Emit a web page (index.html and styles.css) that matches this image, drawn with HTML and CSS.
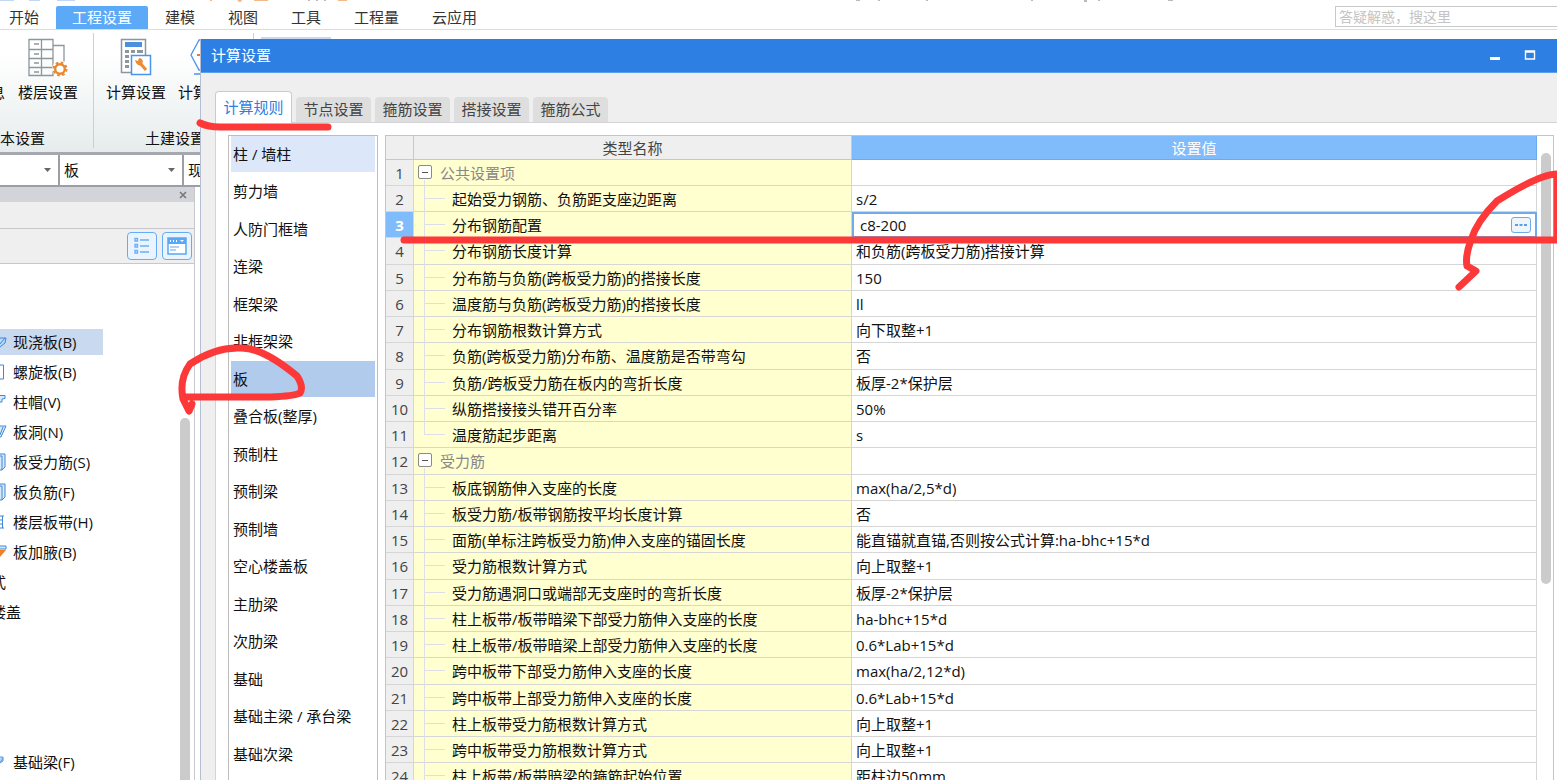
FILE: index.html
```html
<!DOCTYPE html>
<html lang="zh-CN">
<head>
<meta charset="utf-8">
<meta name="viewport" content="width=device-width, initial-scale=1">
<title>计算设置</title>
<link rel="stylesheet" href="styles.css">
</head>
<body>
<div class="app">
  <svg class="title-scraps" width="1200" height="3" aria-hidden="true">
    <path d="M0 0h14v1H0zM29 0h11v1H29zM57 0h18v1H57z" fill="#c3d6f3"/>
    <path d="M210 0h2v1h-2zM237 0h5l-1 2h-2zM254 0h14v1h-14zM338 0h9v1h-9z" fill="#f2b98b"/>
    <path d="M308 0h2v1h-2zM316 0h2v1h-2zM324 0h2v1h-2zM856 0h4v1h-4zM878 0h2v1h-2zM926 0h2v1h-2zM1031 0h2v1h-2zM1084 0h3v2h-3zM1098 0h2v1h-2zM1168 0h5v1h-5z" fill="#b9b9c4"/>
  </svg>
  <nav class="menu">
    <button>开始</button>
    <button class="menu-active">工程设置</button>
    <button>建模</button>
    <button>视图</button>
    <button>工具</button>
    <button>工程量</button>
    <button>云应用</button>
    <input class="search" type="text" aria-label="搜索" placeholder="答疑解惑，搜这里">
  </nav>

  <section class="ribbon">
    <div class="group group-base">
      <div class="tools">
        <button class="tool tool-info"><span class="icon"></span>息</button>
        <button class="tool"><svg class="icon" viewBox="0 0 42 40" width="42" height="40" fill="none" stroke="#8c969b" stroke-width="1.3">
          <path d="M2 1.500h24v36H2zM2 11.500h24M2 20.500h24M2 29.500h24M14.500 2v35M7 6h5M7 16h5M7 25h5M7 34h5M26 7.500h11v16"/>
          <circle cx="33" cy="31" r="8" fill="#fff" stroke="none"/>
          <circle cx="33" cy="31" r="6.500" stroke="#e8872e" stroke-width="2" stroke-dasharray="2.600 2.500"/>
          <circle cx="33" cy="31" r="4.800" stroke="#e8872e" stroke-width="2.400"/></svg>楼层设置</button>
      </div>
      <h2>本设置</h2>
    </div>
    <div class="group group-civil">
      <div class="tools">
        <button class="tool"><svg class="icon" viewBox="0 0 42 40" width="42" height="40" fill="none">
          <path d="M6.500 1.500h24v33h-24z" fill="#fff" stroke="#8c969b" stroke-width="1.500"/>
          <path d="M10 4h17v5H10z" fill="#4a8fe0"/>
          <path d="M10 12h4v3h-4zM16 12h4v3h-4zM22 12h6v3h-6zM10 17h4v3h-4zM10 22h4v3h-4zM10 27h4v3h-4z" fill="#8c969b"/>
          <path d="M16.500 17.500h19v19h-19z" fill="#fff" stroke="#4a94ea" stroke-width="1.500"/>
          <path d="M25 25l6 7" stroke="#ec8b33" stroke-width="3"/>
          <path d="M20 22l3 1 1-3c3 0 5 3 3 6s-6 1-7-4z" fill="#ec8b33"/></svg>计算设置</button>
        <button class="tool"><svg class="icon" viewBox="0 0 42 40" width="42" height="40" fill="none" stroke="#4a94ea" stroke-width="1.300">
          <path d="M12 2L4 17l8 15h18l8-15-8-15zM7 36h28"/><path d="M10 17h12" stroke="#ec7a28" stroke-width="2"/></svg>计算规则</button>
      </div>
      <h2>土建设置</h2>
    </div>
    <div class="group-next"></div>
  </section>

  <div class="selectors">
    <label class="combo combo-floor"><select aria-label="楼层"><option></option></select><svg width="7" height="4" viewBox="0 0 7 4"><path d="M0 0h7L3.500 4z" fill="#666"/></svg></label>
    <label class="combo combo-type"><select aria-label="构件类型"><option>板</option></select><svg width="7" height="4" viewBox="0 0 7 4"><path d="M0 0h7L3.500 4z" fill="#666"/></svg></label>
    <label class="combo combo-part"><select aria-label="构件"><option>现浇板</option></select></label>
  </div>

  <aside class="panel">
    <div class="panel-head"><button class="close" aria-label="关闭"><svg width="8" height="8" viewBox="0 0 8 8"><path d="M1 1l6 6M7 1L1 7" stroke="#777" stroke-width="1.600"/></svg></button></div>
    <div class="panel-band"></div>
    <div class="panel-tools">
      <button class="view" aria-label="列表"><svg width="18" height="18" viewBox="0 0 18 18" fill="none" stroke="#6aaef2" stroke-width="1.300"><path d="M2 1.500h2.500V4H2zM2 7.500h2.500V10H2zM2 13.500h2.500V16H2zM7 3h9M7 9h9M7 15h9"/></svg></button>
      <button class="view" aria-label="窗口"><svg width="20" height="18" viewBox="0 0 20 18"><path d="M1 1h18v16H1z" fill="#fff" stroke="#5aa7f5" stroke-width="1.500"/><path d="M1 1h18v6H1z" fill="#5aa7f5"/><path d="M3 3h1v2H3zM6 3h1v2H6zM9 3h1v2H9zM13 3h4l-2 2z" fill="#fff"/><path d="M3 10h9M3 13h6" stroke="#5aa7f5"/></svg></button>
    </div>
    <div class="tree">
      <ul>
        <li class="tree-on"><svg class="mark" viewBox="0 0 8 14"><path d="M-4 9L0 3h6L5 8l-5 4zM0 9l5-6" fill="#b9d8f8" stroke="#3e87d8"/></svg><span>现浇板(B)</span></li>
        <li><svg class="mark" viewBox="0 0 8 14"><path d="M-4 0h7.500v14H-4z" fill="#fff" stroke="#3e87d8"/></svg><span>螺旋板(B)</span></li>
        <li><svg class="mark" viewBox="0 0 8 14"><path d="M-4 .5h9v3L2 4v3h-6" fill="#dbeafb" stroke="#3e87d8"/></svg><span>柱帽(V)</span></li>
        <li><svg class="mark" viewBox="0 0 8 14"><path d="M-2 1h8L1 12H-2zM3 2l-3 8" fill="#dbeafb" stroke="#3e87d8"/></svg><span>板洞(N)</span></li>
        <li><svg class="mark" viewBox="0 0 8 18"><path d="M-3 1h8v13l-3 3h-5zM2 3v14M-3 3h5" fill="#dbeafb" stroke="#3e87d8"/></svg><span>板受力筋(S)</span></li>
        <li><svg class="mark" viewBox="0 0 8 18"><path d="M-3 1h8v13l-3 3h-5zM2 3v14M-3 3h5" fill="#dbeafb" stroke="#3e87d8"/></svg><span>板负筋(F)</span></li>
        <li><svg class="mark" viewBox="0 0 8 14"><path d="M0 1h4M0 13h4M0 5h2M0 9h2M2.500 1v12" fill="none" stroke="#3e87d8"/></svg><span>楼层板带(H)</span></li>
        <li><svg class="mark" viewBox="0 0 8 14"><path d="M-2 1h8v3h-8z" fill="#dbeafb" stroke="#3e87d8"/><path d="M-2 5h8L0 12z" fill="#f08020"/></svg><span>板加腋(B)</span></li>
        <li class="tree-cut">式</li>
        <li class="tree-cut">楼盖</li>
      </ul>
      <ul>
        <li><svg class="mark" viewBox="0 0 8 14"><path d="M-3 2h6v4l-6 4zM0 8l3-5" fill="#b9d8f8" stroke="#5a9ae0"/></svg><span>基础梁(F)</span></li>
      </ul>
      <span class="tree-scroll"></span>
    </div>
  </aside>

  <section class="dialog" role="dialog" aria-labelledby="dialog-title">
    <header class="dialog-head">
      <h1 id="dialog-title">计算设置</h1>
      <button class="win" aria-label="最小化"><svg width="12" height="12" viewBox="0 0 12 12"><path d="M1 8h10v3H1z" fill="#fff"/></svg></button>
      <button class="win" aria-label="最大化"><svg width="12" height="12" viewBox="0 0 12 12"><path d="M1.500 2h9v8h-9zM1 3h10" fill="none" stroke="#fff" stroke-width="1.400"/></svg></button>
    </header>
    <div class="tabs" role="tablist">
      <button role="tab" class="tab tab-on" aria-selected="true">计算规则</button>
      <button role="tab" class="tab">节点设置</button>
      <button role="tab" class="tab">箍筋设置</button>
      <button role="tab" class="tab">搭接设置</button>
      <button role="tab" class="tab">箍筋公式</button>
    </div>
    <div class="page">
      <ul class="parts">
        <li class="part-first">柱 / 墙柱</li><li>剪力墙</li><li>人防门框墙</li><li>连梁</li><li>框架梁</li><li>非框架梁</li><li class="part-on">板</li><li>叠合板(整厚)</li><li>预制柱</li><li>预制梁</li><li>预制墙</li><li>空心楼盖板</li><li>主肋梁</li><li>次肋梁</li><li>基础</li><li>基础主梁 / 承台梁</li><li>基础次梁</li>
      </ul>
      <div class="grid">
        <table>
          <colgroup><col class="col-no"><col class="col-name"><col></colgroup>
          <thead><tr><th></th><th>类型名称</th><th class="head-on">设置值</th></tr></thead>
          <tbody>
            <tr class="section"><th>1</th><td><button class="fold" aria-label="折叠"></button>公共设置项</td><td></td></tr>
            <tr><th>2</th><td>起始受力钢筋、负筋距支座边距离</td><td>s/2</td></tr>
            <tr class="row-on"><th>3</th><td>分布钢筋配置</td><td><div class="editor"><input type="text" aria-label="分布钢筋配置" value="c8-200"><button class="more" aria-label="更多"><svg width="12" height="4" viewBox="0 0 12 4"><path d="M0 1h3v2H0zM4.500 1h3v2h-3zM9 1h3v2H9z" fill="#5ba0e0"/></svg></button></div></td></tr>
            <tr><th>4</th><td>分布钢筋长度计算</td><td>和负筋(跨板受力筋)搭接计算</td></tr>
            <tr><th>5</th><td>分布筋与负筋(跨板受力筋)的搭接长度</td><td>150</td></tr>
            <tr><th>6</th><td>温度筋与负筋(跨板受力筋)的搭接长度</td><td>ll</td></tr>
            <tr><th>7</th><td>分布钢筋根数计算方式</td><td>向下取整+1</td></tr>
            <tr><th>8</th><td>负筋(跨板受力筋)分布筋、温度筋是否带弯勾</td><td>否</td></tr>
            <tr><th>9</th><td>负筋/跨板受力筋在板内的弯折长度</td><td>板厚-2*保护层</td></tr>
            <tr><th>10</th><td>纵筋搭接接头错开百分率</td><td>50%</td></tr>
            <tr class="last"><th>11</th><td>温度筋起步距离</td><td>s</td></tr>
            <tr class="section"><th>12</th><td><button class="fold" aria-label="折叠"></button>受力筋</td><td></td></tr>
            <tr><th>13</th><td>板底钢筋伸入支座的长度</td><td>max(ha/2,5*d)</td></tr>
            <tr><th>14</th><td>板受力筋/板带钢筋按平均长度计算</td><td>否</td></tr>
            <tr><th>15</th><td>面筋(单标注跨板受力筋)伸入支座的锚固长度</td><td>能直锚就直锚,否则按公式计算:ha-bhc+15*d</td></tr>
            <tr><th>16</th><td>受力筋根数计算方式</td><td>向上取整+1</td></tr>
            <tr><th>17</th><td>受力筋遇洞口或端部无支座时的弯折长度</td><td>板厚-2*保护层</td></tr>
            <tr><th>18</th><td>柱上板带/板带暗梁下部受力筋伸入支座的长度</td><td>ha-bhc+15*d</td></tr>
            <tr><th>19</th><td>柱上板带/板带暗梁上部受力筋伸入支座的长度</td><td>0.6*Lab+15*d</td></tr>
            <tr><th>20</th><td>跨中板带下部受力筋伸入支座的长度</td><td>max(ha/2,12*d)</td></tr>
            <tr><th>21</th><td>跨中板带上部受力筋伸入支座的长度</td><td>0.6*Lab+15*d</td></tr>
            <tr><th>22</th><td>柱上板带受力筋根数计算方式</td><td>向上取整+1</td></tr>
            <tr><th>23</th><td>跨中板带受力筋根数计算方式</td><td>向上取整+1</td></tr>
            <tr><th>24</th><td>柱上板带/板带暗梁的箍筋起始位置</td><td>距柱边50mm</td></tr>
          </tbody>
        </table>
        <div class="scroll"><span></span></div>
      </div>
    </div>
  </section>

  <svg class="pen" viewBox="0 0 1557 780" width="1557" height="780" aria-hidden="true">
    <path d="M200 123Q208 127 220 127H328" stroke-width="7"/>
    <path d="M404 240H1557V174Q1540 174 1497 201Q1477 221 1471 240Q1465 256 1467 266L1476 271L1459 287" stroke-width="7"/>
    <path d="M186 397H270Q295 396 300 393Q304 387 297 376Q262 347 240 348Q215 347 190 364Q179 379 183 399L189 411L192 404" stroke-width="7"/>
  </svg>
</div>
</body>
</html>
```
FILE: styles.css
```css
* { box-sizing: border-box; }
body, h1, h2, ul { margin: 0; padding: 0; }
body, button, input, select {
  font-family: "Open Sans", "Noto Sans CJK SC", sans-serif;
  font-size: 15px;
  line-height: 20px;
  color: #111;
}
h1, h2 { font-size: 15px; font-weight: 400; }
ul { list-style: none; }
button { border: 0; padding: 0; background: none; white-space: nowrap; }

.app {
  position: relative;
  height: 100vh;
  overflow: hidden;
  background: #fff;
  display: flex;
  flex-direction: column;
}
.title-scraps { position: absolute; left: 0; top: 0; }

/* main menu */
.menu {
  display: flex;
  align-items: flex-end;
  gap: 1px;
  flex: none;
  height: 30px;
  border-bottom: 1px solid #dcdcdc;
}
.menu button { height: 23px; padding: 0 16px 2px; color: #333; }
.menu button:first-child { padding-left: 9px; }
.menu .menu-active { background: #5ca9f8; border-radius: 2px 2px 0 0; color: #fff; }
.search {
  width: 222px;
  height: 21px;
  margin: 0 0 2px auto;
  padding: 0 3px;
  border: 1px solid #c8c8c8;
  border-right: 0;
  font-size: 14px;
}
.search::placeholder { color: #c4c4c4; }

/* ribbon */
.ribbon {
  display: flex;
  flex: none;
  height: 125px;
  padding-top: 3px;
  background: linear-gradient(#fff 20%, #e6ecec);
  border-bottom: 3px solid #a5a8ae;
}
.group { display: flex; flex-direction: column; justify-content: space-between; height: 115px; border-right: 1px solid #ccd0d3; }
.tools { display: flex; gap: 13px; padding-top: 5px; }
.tool { display: flex; flex-direction: column; align-items: center; gap: 4px; }
.icon { width: 42px; height: 40px; }
.tool-info .icon { width: 15px; }
.group-base { width: 94px; }
.group-base .tools { margin-left: -10px; }
.group-civil { width: 160px; padding-left: 12px; }
.group-civil .tools { gap: 12px; }
.group-civil h2 { padding-left: 39px; }
.group-next { width: 70px; height: 20px; margin: 4px 7px; background: #c9d8ee; }

/* selectors */
.selectors { display: flex; flex: none; height: 32px; background: #9b9ea4; padding-bottom: 2px; gap: 2px; }
.combo { display: flex; align-items: center; background: #fff; padding-bottom: 1px; }
.combo select { appearance: none; flex: 1; min-width: 0; border: 0; background: none; padding: 0 4px; }
.combo svg { margin-right: 7px; }
.combo-floor { width: 58px; }
.combo-type { width: 122px; }
.combo-part { width: 200px; }

/* component panel */
.panel { display: flex; flex-direction: column; flex: 1; width: 195px; min-height: 0; border-right: 1px solid #c8c8cc; }
.panel-head { display: flex; justify-content: flex-end; align-items: center; flex: none; height: 15px; padding-right: 7px; background: #d3d4da; }
.close { display: flex; }
.panel-band { flex: none; height: 27px; background: #efefef; border-bottom: 1px solid #c8c8cc; }
.panel-tools { display: flex; justify-content: flex-end; align-items: center; gap: 5px; flex: none; height: 35px; padding-right: 2px; background: #efefef; border-bottom: 1px solid #c8c8cc; }
.view { display: flex; align-items: center; justify-content: center; width: 30px; height: 28px; border: 1px solid #64acf5; border-radius: 4px; background: #eaf4ff; }
.tree { position: relative; flex: 1; min-height: 0; padding-top: 65px; overflow: hidden; }
.tree ul { margin-bottom: 124px; }
.tree li { display: flex; align-items: center; gap: 5px; width: 103px; height: 26px; margin-bottom: 4px; white-space: nowrap; }
.tree-on { background: #c9d9ef; }
.tree .tree-cut { margin-left: -9px; }
.mark { flex: none; width: 8px; height: 18px; }
.tree-scroll { position: absolute; right: 4px; top: 154px; bottom: 0; width: 10px; border-radius: 5px 5px 0 0; background: #cbcbcb; }

/* settings dialog */
.dialog {
  position: absolute;
  left: 200px;
  right: 0;
  top: 39px;
  bottom: 0;
  display: flex;
  flex-direction: column;
  overflow: hidden;
  background: #efefef;
  border-left: 1px solid #b4bfd4;
}
.dialog-head { display: flex; align-items: center; gap: 23px; flex: none; height: 34px; margin-left: -1px; padding: 0 21px 1px 11px; background: #2d7fe3; border-bottom: 1px solid #5b9fee; }
.dialog-head h1 { flex: 1; color: #fff; }
.win { display: flex; }
.tabs { display: flex; align-items: flex-end; gap: 4px; flex: none; height: 49px; padding-left: 14px; }
.tab { width: 75px; height: 25px; padding-bottom: 1px; border-radius: 4px 4px 0 0; background: #dedede; color: #444; }
.tab-on { position: relative; z-index: 1; width: 77px; height: 32px; margin-bottom: -1px; background: #fff; border: 1px solid #cacad2; border-bottom: 0; color: #2d7fe3; }
.page { display: flex; flex: 1; gap: 7px; min-height: 0; margin-left: 14px; padding: 12px 3px 0 12px; background: #fff; border: 1px solid #d4d4d8; border-right: 0; border-bottom: 0; }

.parts { flex: none; width: 150px; padding: 0 2px; border: 1px solid #bdbdbd; border-bottom: 0; overflow: hidden; }
.parts li { height: 36px; margin-bottom: 1px; padding-left: 2px; line-height: 36px; white-space: nowrap; }
.parts li:nth-child(even) { margin-bottom: 2px; }
.part-first { background: #dce8f9; }
.part-on { background: #b1cbec; }

.grid { display: flex; flex: 1; min-width: 0; overflow: hidden; border: 1px solid #c4c4c8; border-bottom: 0; }
table { flex: 1; width: 0; height: 0; table-layout: fixed; border-collapse: separate; border-spacing: 0; }
.col-no { width: 28px; }
.col-name { width: 438px; }
th, td { height: 26px; padding: 0; border: solid #d6d6d6; border-width: 0 1px 1px 0; white-space: nowrap; }
tbody tr:nth-child(4n) > * { height: 27px; }
th { background: #efefef; font-weight: 400; color: #444; }
thead th { height: 24px; border-color: #c8c8cc; }
thead .head-on { background: #80bbfb; border-color: #6aabf0; color: #fff; }
td:nth-child(2) { position: relative; padding-left: 38px; background: #ffffcf; }
td:nth-child(3) { padding-left: 4px; }
td:nth-child(2)::before { content: ""; position: absolute; left: 10px; top: 0; bottom: -1px; border-left: 1px solid #dedee8; }
td:nth-child(2)::after { content: ""; position: absolute; left: 10px; top: 12px; width: 21px; border-top: 1px solid #dedee8; }
.last td:nth-child(2)::before { bottom: 13px; }
.section td:nth-child(2) { padding-left: 26px; color: #888; }
.section td:nth-child(2)::before { top: 20px; }
.section td:nth-child(2)::after { display: none; }
.fold { position: absolute; left: 4px; top: 5px; width: 14px; height: 14px; border: 1px solid #8a8a8a; border-radius: 2px; background: linear-gradient(#555, #555) center / 6px 1px no-repeat #fff; }
.row-on th { background: #80bbfb; color: #fff; font-weight: 700; }
.row-on td:nth-child(3) { padding: 0; border: 0; }
.editor { display: flex; align-items: center; height: 26px; padding: 0 4px 0 6px; border: 2px solid #6fabe9; }
.editor input { flex: 1; min-width: 0; padding: 0; border: 0; outline: 0; background: none; }
.more { display: flex; align-items: center; justify-content: center; width: 20px; height: 16px; border: 1px solid #6fabe9; border-radius: 3px; background: #eef5fc; }
.scroll { flex: none; width: 16px; padding: 17px 2px 0 4px; }
.scroll span { display: block; height: 431px; border-radius: 5px; background: #cbcbcb; }

/* red pen marks over the window */
.pen { position: absolute; left: 0; top: 0; pointer-events: none; fill: none; stroke: #fc3838; stroke-linecap: round; stroke-linejoin: round; }
```
